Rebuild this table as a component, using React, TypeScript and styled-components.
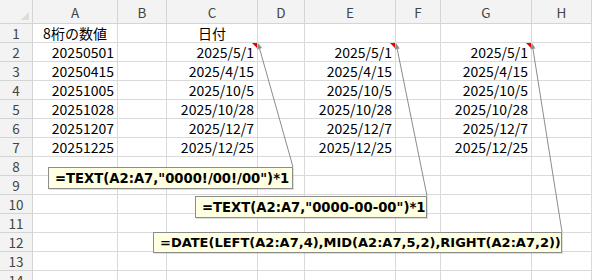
import React from 'react'
import styled, { createGlobalStyle } from 'styled-components'

//-----------------------------------------------------------------------------
// Sheet data
//-----------------------------------------------------------------------------
const COLS = ['A', 'B', 'C', 'D', 'E', 'F', 'G', 'H']
const COL_WIDTHS = [33, 85, 49, 91, 47, 91, 45, 91, 60]
const HEADER_HEIGHT = 24
const ROW_HEIGHT = 19
const ROW_COUNT = 14

const SOURCE = ['20250501', '20250415', '20251005', '20251028', '20251207', '20251225']
const DATES = ['2025/5/1', '2025/4/15', '2025/10/5', '2025/10/28', '2025/12/7', '2025/12/25']

const cellText = (row: number, col: number) => {
  if (row === 1) {
    if (col === 0) return '8桁の数値'
    if (col === 2) return '日付'
    return ''
  }
  const i = row - 2
  if (i < 0 || i >= SOURCE.length) return ''
  if (col === 0) return SOURCE[i]
  if (col === 2 || col === 4 || col === 6) return DATES[i]
  return ''
}

// formula notes, with the cell corner each one points at
const NOTES = [
  { text: '=TEXT(A2:A7,"0000!/00!/00")*1', left: 48, top: 167, width: 245, height: 22, anchorX: 258, size: 13.2 },
  { text: '=TEXT(A2:A7,"0000-00-00")*1', left: 195, top: 196, width: 232, height: 22, anchorX: 396, size: 13.2 },
  { text: '=DATE(LEFT(A2:A7,4),MID(A2:A7,5,2),RIGHT(A2:A7,2))', left: 153, top: 232, width: 409, height: 21, anchorX: 532, size: 13 },
]
const ANCHOR_Y = HEADER_HEIGHT + ROW_HEIGHT

// right edge of a data column, counted from the sheet's left side
const colRight = (ci: number) => COL_WIDTHS.slice(0, ci + 2).reduce((a, b) => a + b, 0)

//-----------------------------------------------------------------------------
// Component
//-----------------------------------------------------------------------------
const App = () => {
  const rows = Array.from({ length: ROW_COUNT }, (_, i) => i + 1)

  return (
    <>
      <GlobalStyle />
      <Sheet>
        <Grid>
          <Corner>
            <CornerMark />
          </Corner>
          {COLS.map(c => (
            <ColHeader key={c}>{c}</ColHeader>
          ))}
          {rows.map(r => (
            <React.Fragment key={r}>
              <RowHeader>{r}</RowHeader>
              {COLS.map((c, ci) => (
                <Cell key={c} $center={r === 1}>
                  {cellText(r, ci)}
                  {r === 2 && NOTES.some(n => n.anchorX === colRight(ci)) && <NoteFlag />}
                </Cell>
              ))}
            </React.Fragment>
          ))}
        </Grid>

        <Connectors width={592} height={280}>
          {NOTES.map(n => {
            const x2 = n.left + n.width
            const y2 = n.top
            const dx = x2 - n.anchorX
            const dy = y2 - ANCHOR_Y
            const len = Math.sqrt(dx * dx + dy * dy)
            const ux = dx / len
            const uy = dy / len
            const bx = n.anchorX + ux * 6
            const by = ANCHOR_Y + uy * 6
            return (
              <g key={n.text}>
                <line x1={bx} y1={by} x2={x2} y2={y2} stroke="#8c8c8c" strokeWidth={1} />
                <polygon
                  points={`${n.anchorX},${ANCHOR_Y} ${bx - uy * 2.5},${by + ux * 2.5} ${bx + uy * 2.5},${by - ux * 2.5}`}
                  fill="#8c8c8c"
                />
              </g>
            )
          })}
        </Connectors>

        {NOTES.map(n => (
          <Note
            key={n.text}
            $size={n.size}
            style={{ left: n.left, top: n.top, width: n.width, height: n.height }}>
            {n.text}
          </Note>
        ))}
      </Sheet>
    </>
  )
}

//-----------------------------------------------------------------------------
// Styled Components
//-----------------------------------------------------------------------------
const GlobalStyle = createGlobalStyle`
  body {
    margin: 0;
    background: #ffffff;
  }
`

const Sheet = styled.div`
  position: relative;
  width: 592px;
  height: 280px;
  overflow: hidden;
  background: #ffffff;
  font-family: "Noto Sans CJK JP", "Liberation Sans", sans-serif;
`

const Grid = styled.div`
  display: grid;
  grid-template-columns: ${COL_WIDTHS.map(w => `${w}px`).join(' ')};
  grid-template-rows: ${HEADER_HEIGHT}px repeat(${ROW_COUNT}, ${ROW_HEIGHT}px);
`

const HeaderBase = styled.div`
  box-sizing: border-box;
  background: #f3f3f3;
  color: #444444;
  font-family: "Noto Sans CJK JP", "Liberation Sans", sans-serif;
  font-size: 13.5px;
  display: flex;
  align-items: center;
  justify-content: center;
  border-right: 1px solid #d4d4d4;
  border-bottom: 1px solid #d4d4d4;
`

const Corner = styled(HeaderBase)`
  position: relative;
`

const CornerMark = styled.div`
  position: absolute;
  right: 3px;
  bottom: 3px;
  width: 0;
  height: 0;
  border-left: 8px solid transparent;
  border-bottom: 8px solid #dcdcdc;
`

const ColHeader = styled(HeaderBase)`
  padding-top: 1px;
`

const RowHeader = styled(HeaderBase)``

const Cell = styled.div<{ $center?: boolean }>`
  position: relative;
  box-sizing: border-box;
  border-right: 1px solid #dadada;
  border-bottom: 1px solid #dadada;
  display: flex;
  align-items: center;
  justify-content: ${({ $center }) => ($center ? 'center' : 'flex-end')};
  padding: 0 3px 1px 3px;
  font-size: 14px;
  line-height: 18px;
  color: #000000;
  white-space: nowrap;
`

const NoteFlag = styled.span`
  position: absolute;
  top: 0;
  right: 0;
  width: 0;
  height: 0;
  border-top: 5px solid #e60000;
  border-left: 5px solid transparent;
`

const Connectors = styled.svg`
  position: absolute;
  left: 0;
  top: 0;
  pointer-events: none;
`

const Note = styled.div<{ $size: number }>`
  position: absolute;
  box-sizing: border-box;
  background: #ffffe1;
  border: 1px solid #8c8c8c;
  box-shadow: 1px 1px 0 rgba(0, 0, 0, 0.12);
  display: flex;
  align-items: center;
  padding: 0 6px;
  font-family: "DejaVu Sans", "Liberation Sans", sans-serif;
  font-weight: bold;
  font-size: ${({ $size }) => $size}px;
  color: #000000;
  white-space: nowrap;
`

export default App
